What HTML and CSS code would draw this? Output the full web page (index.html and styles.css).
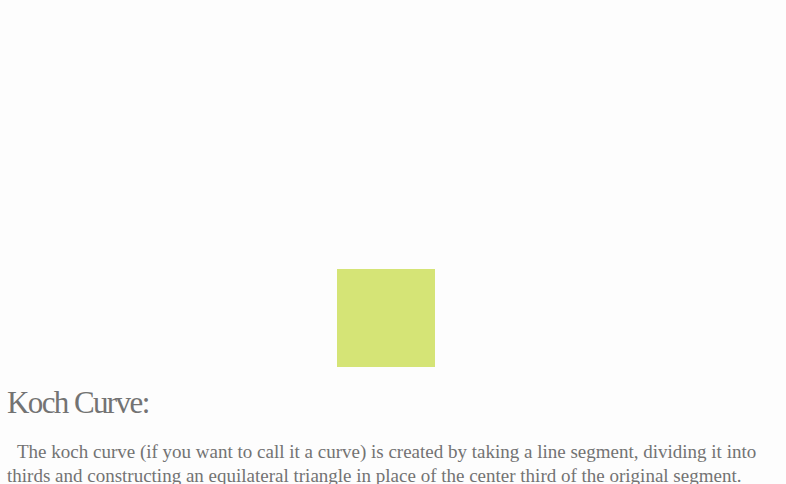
FILE: index.html
```html
<!DOCTYPE html>
<html>
<head>
<meta charset="utf-8">
<link rel="stylesheet" href="styles.css">
</head>
<body>
<div class="stage">
  <div class="square"></div>
</div>
<h1 class="title">Koch Curve:</h1>
<p class="text">The koch curve (if you want to call it a curve) is created by taking a line segment, dividing it into thirds and constructing an equilateral triangle in place of the center third of the original segment.</p>
</body>
</html>
```
FILE: styles.css
```css
html, body {
  margin: 0;
  padding: 0;
  background: #fdfdfd;
}
body {
  width: 771px;
  font-family: "Liberation Serif", "Times New Roman", serif;
  color: #737373;
}
.stage {
  height: 367px;
  display: flex;
  justify-content: center;
  align-items: flex-end;
}
.square {
  width: 98px;
  height: 98px;
  background: #d5e476;
}
.title {
  margin: 20px 0 0 7px;
  font-weight: normal;
  font-size: 31px;
  letter-spacing: -1.6px;
  line-height: 32px;
}
.text {
  margin: 21px 0 0 7px;
  font-size: 19px;
  line-height: 24px;
  text-indent: 10px;
  letter-spacing: 0;
}
```
